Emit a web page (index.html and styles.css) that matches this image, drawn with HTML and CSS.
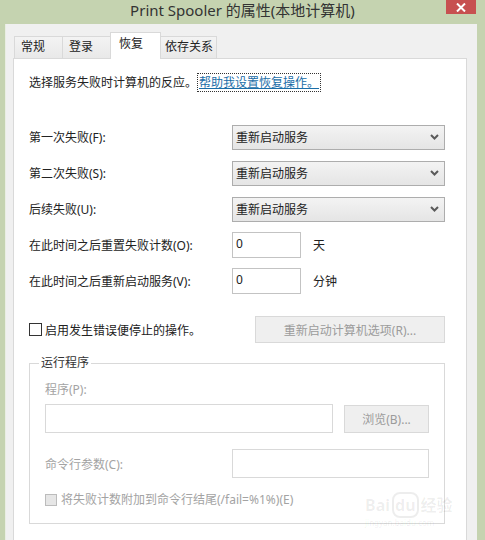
FILE: index.html
```html
<!DOCTYPE html>
<html lang="zh-CN">
<head>
  <meta charset="UTF-8" />
  <title>Print Spooler 的属性(本地计算机)</title>
  <link rel="stylesheet" href="styles.css">
</head>
<body>

  <div class="window">
    <div class="titlebar">
      <span></span>
      <span class="title">Print Spooler 的属性(本地计算机)</span>
      <span class="close">
        <svg width="10" height="9" viewBox="0 0 10 9"><path d="M1 0.5 L9 8.5 M9 0.5 L1 8.5" stroke="#fff" stroke-width="2"/></svg>
      </span>
    </div>

    <div class="client">
      <div class="tabs">
        <div class="tab">常规</div>
        <div class="tab">登录</div>
        <div class="tab active">恢复</div>
        <div class="tab last">依存关系</div>
      </div>

      <div class="panel">
        <div class="intro">选择服务失败时计算机的反应。<a class="help-link" href="#">帮助我设置恢复操作。</a></div>

        <div class="rows">
          <label>第一次失败(F):</label>
          <div class="select"><span>重新启动服务</span><svg width="9" height="6" viewBox="0 0 9 6"><polyline points="1,1 4.5,4.5 8,1" fill="none" stroke="#5a5a5a" stroke-width="2"/></svg></div>

          <label>第二次失败(S):</label>
          <div class="select"><span>重新启动服务</span><svg width="9" height="6" viewBox="0 0 9 6"><polyline points="1,1 4.5,4.5 8,1" fill="none" stroke="#5a5a5a" stroke-width="2"/></svg></div>

          <label>后续失败(U):</label>
          <div class="select"><span>重新启动服务</span><svg width="9" height="6" viewBox="0 0 9 6"><polyline points="1,1 4.5,4.5 8,1" fill="none" stroke="#5a5a5a" stroke-width="2"/></svg></div>

          <label>在此时间之后重置失败计数(O):</label>
          <div class="num-row"><div class="input small">0</div><span>天</span></div>

          <label>在此时间之后重新启动服务(V):</label>
          <div class="num-row"><div class="input small">0</div><span>分钟</span></div>
        </div>

        <div class="check-row">
          <div class="check"><span class="box"></span>启用发生错误便停止的操作。</div>
          <div class="btn restart">重新启动计算机选项(R)...</div>
        </div>

        <fieldset class="group">
          <legend>运行程序</legend>
          <div class="muted prog-label">程序(P):</div>
          <div class="prog-row">
            <div class="input prog"></div>
            <div class="btn browse">浏览(B)...</div>
          </div>
          <div class="cmd-row">
            <span class="muted">命令行参数(C):</span>
            <div class="input cmd"></div>
          </div>
          <div class="check muted fail"><span class="box off"></span>将失败计数附加到命令行结尾(/fail=%1%)(E)</div>
        </fieldset>

        <div class="watermark">
          <div class="mark">Bai<span class="du">du</span>经验</div>
          <div class="site">jingyan.baidu.com</div>
        </div>
      </div>
    </div>
  </div>

</body>
</html>
```

FILE: styles.css
```css
body {
  margin: 0;
  padding: 0;
  font-family: "Noto Sans", "Noto Sans CJK SC", sans-serif;
  font-size: 12px;
  color: #222;
  background: #c5d3b0;
}

.window {
  height: 540px;
  display: flex;
  flex-direction: column;
  background: #c5d3b0;
  overflow: hidden;
}

.titlebar {
  height: 24px;
  display: grid;
  grid-template-columns: 1fr auto 1fr;
  align-items: start;
}

.title {
  font-size: 15px;
  line-height: 21px;
  color: #333;
}

.close {
  justify-self: end;
  margin-right: 9px;
  width: 30px;
  height: 14px;
  background: #c75050;
  display: flex;
  align-items: center;
  justify-content: center;
}

.client {
  flex: 1;
  margin: 0 8px 0 5px;
  border-left: 1px solid #e9eee2;
  background: #f0f0f0;
  padding: 8px 10px 0 7px;
  display: flex;
  flex-direction: column;
}

/* tabs */
.tabs {
  display: flex;
  align-items: flex-end;
  height: 26px;
  margin-left: 1px;
}

.tab {
  box-sizing: border-box;
  min-width: 48px;
  height: 22px;
  line-height: 20px;
  padding: 0 3px 0 6px;
  border: 1px solid #d9d9d9;
  border-bottom: none;
  border-right: none;
  background: linear-gradient(#f3f3f3, #e9e9e9);
}

.tab.last {
  border-right: 1px solid #d9d9d9;
  padding-left: 4px;
}

.tab.active {
  min-width: 51px;
  height: 27px;
  line-height: 22px;
  padding-left: 8px;
  background: #fff;
  border: 1px solid #d9d9d9;
  border-bottom: none;
  margin-bottom: -1px;
  position: relative;
  z-index: 1;
}

.tab.active + .tab {
  border-left: none;
}

/* panel */
.panel {
  flex: 1;
  position: relative;
  background: #fff;
  border: 1px solid #d9d9d9;
  border-bottom: none;
  padding: 15px 21px 0 15px;
}

.intro {
  line-height: 18px;
}

.help-link {
  color: #1a6ea8;
  text-decoration: underline;
  border: 1px dotted #333;
  padding: 0 1px;
}

.rows {
  margin-top: 32px;
  display: grid;
  grid-template-columns: 203px 213px;
  grid-auto-rows: 26px;
  row-gap: 10px;
  align-items: center;
}

.select {
  box-sizing: border-box;
  height: 25px;
  border: 1px solid #adadad;
  background: linear-gradient(#f3f3f3, #e5e5e5);
  display: flex;
  align-items: center;
  justify-content: space-between;
  padding: 0 5px 0 3px;
}

.num-row {
  display: flex;
  align-items: center;
  gap: 12px;
}

.input {
  box-sizing: border-box;
  background: #fff;
  border: 1px solid #c3c3c3;
  padding: 0 3px;
  line-height: 22px;
}

.input.small {
  width: 69px;
  height: 26px;
}

.check-row {
  margin-top: 22px;
  display: flex;
  align-items: center;
  justify-content: space-between;
}

.check {
  display: flex;
  align-items: center;
  gap: 3px;
}

.box {
  box-sizing: border-box;
  width: 13px;
  height: 13px;
  border: 1px solid #333;
  background: #fff;
}

.box.off {
  width: 12px;
  height: 12px;
  border-color: #bcbcbc;
  background: #e6e6e6;
}

.btn {
  box-sizing: border-box;
  background: #efefef;
  border: 1px solid #d9d9d9;
  color: #9b9b9b;
  display: flex;
  align-items: center;
  justify-content: center;
}

.btn.restart {
  width: 190px;
  height: 27px;
}

/* run program group */
.group {
  margin: 12px 0 0;
  border: 1px solid #d9d9d9;
  padding: 0 15px 15px;
}

.group legend {
  padding: 0 2px;
  margin-left: -6px;
  color: #333;
  line-height: 16px;
}

.muted {
  color: #a3a3a3;
}

.prog-label {
  margin-top: 11px;
  line-height: 16px;
}

.prog-row {
  margin-top: 6px;
  display: flex;
  gap: 11px;
  align-items: flex-start;
}

.input.prog {
  width: 288px;
  height: 29px;
  border-color: #d9d9d9;
}

.btn.browse {
  margin-top: 1px;
  width: 85px;
  height: 28px;
}

.cmd-row {
  margin-top: 16px;
  display: grid;
  grid-template-columns: 187px 197px;
  align-items: center;
}

.input.cmd {
  height: 29px;
  border-color: #d9d9d9;
}

.check.fail {
  margin-top: 14px;
  line-height: 16px;
  gap: 4px;
}

/* faint photo watermark over the corner */
.watermark {
  position: absolute;
  left: 351px;
  top: 436px;
  white-space: nowrap;
  color: rgba(0, 0, 0, 0.07);
}

.watermark .mark {
  font-size: 16px;
  font-weight: bold;
  line-height: 20px;
}

.watermark .du {
  border: 2px solid rgba(0, 0, 0, 0.07);
  border-radius: 8px;
  padding: 0 1px;
  margin: 0 2px;
}

.watermark .site {
  margin-top: 3px;
  font-size: 8px;
  line-height: 10px;
}
```
